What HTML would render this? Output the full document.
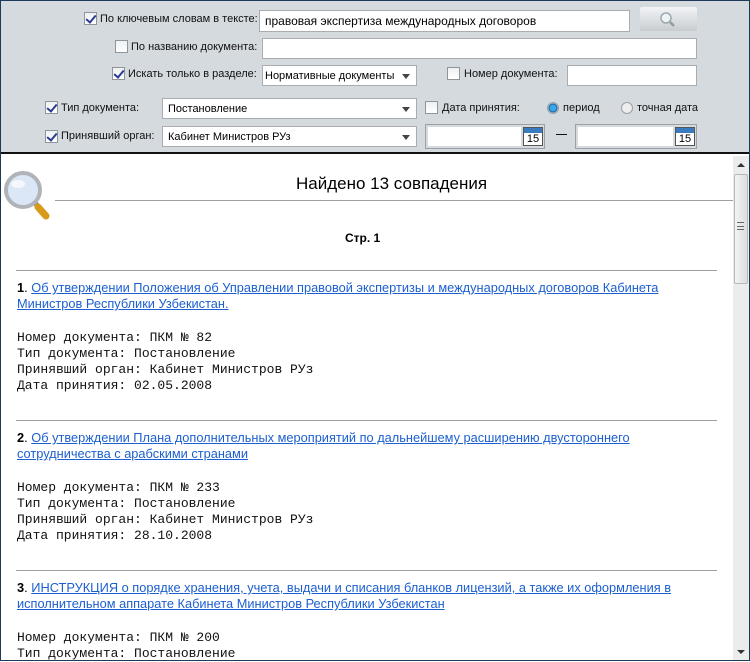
<!DOCTYPE html>
<html><head><meta charset="utf-8"><style>
*{margin:0;padding:0;box-sizing:border-box}
body{width:750px;height:661px;overflow:hidden;font-family:"Liberation Sans",sans-serif;font-size:12px;color:#000;background:#fff;position:relative}
.frame{position:absolute;left:0;top:0;width:750px;height:661px;border:1px solid #1e3a5a;pointer-events:none;z-index:10}
.top{position:absolute;left:0;top:0;width:750px;height:154px;background:#d5dadf;border-bottom:2px solid #111}
.a{position:absolute;white-space:nowrap}
.cb{position:absolute;width:13px;height:13px;border:1px solid #8f959b;background:linear-gradient(#eef0f2,#fff)}
.cb.on::after{content:"";position:absolute;left:3px;top:0px;width:4px;height:8px;border:solid #2a3a90;border-width:0 2px 2px 0;transform:rotate(40deg)}
.inp{position:absolute;background:#fff;border:1px solid #a9adb2;font-size:12px;padding:3px 5px;line-height:14px;white-space:nowrap;overflow:hidden}
.sel::after{content:"";position:absolute;right:6px;top:8px;border:4px solid transparent;border-top:5px solid #444;border-bottom:0}
.lab{position:absolute;font-size:11px;color:#111;white-space:nowrap}
.rad{position:absolute;width:12px;height:12px;border-radius:50%;border:1px solid #9aa0a6;background:#eee}
.rad.on{background:radial-gradient(circle,#3aa6e8 0 3px,#0a5c9e 4px,#ddd 5px)}
.cal{position:absolute;width:20px;height:19px;border:1px solid #555;background:#fff;font-size:11px;text-align:center;line-height:13px;padding-top:5px}
.cal::before{content:"";position:absolute;left:0;top:0;width:18px;height:5px;background:#3a7bbf}
.mono{font-family:"Liberation Mono",monospace;font-size:13px;line-height:16px;position:absolute;left:17px;white-space:pre;color:#111}
.link{position:absolute;left:17px;font-size:12.8px;line-height:16px;width:680px}
.link a{color:#1c5fd0;text-decoration:underline}
.hr{position:absolute;height:1px;background:#a0a0a0}
</style></head><body>
<div class="top">
<div class="cb on" style="left:84px;top:12px"></div><div class="lab" style="left:100px;top:13px">По ключевым словам в тексте:</div>
<div class="inp" style="left:259px;top:10px;width:371px;height:22px">правовая экспертиза международных договоров</div>
<div class="a" style="left:640px;top:7px;width:57px;height:24px;background:linear-gradient(#f2f4f6,#c8ccd0);border-radius:2px">
<svg width="57" height="24"><circle cx="26" cy="11" r="5" fill="#eef3f8" stroke="#9aa" stroke-width="1.5"/><line x1="30" y1="15" x2="34" y2="19" stroke="#999" stroke-width="2.5"/></svg></div>
<div class="cb" style="left:115px;top:40px"></div><div class="lab" style="left:131px;top:41px">По названию документа:</div>
<div class="inp" style="left:262px;top:38px;width:435px;height:21px"></div>
<div class="cb on" style="left:112px;top:67px"></div><div class="lab" style="left:128px;top:68px">Искать только в разделе:</div>
<div class="inp sel" style="left:262px;top:65px;width:155px;height:21px;padding:3px 2px;font-size:11px">Нормативные документы</div>
<div class="cb" style="left:447px;top:67px"></div><div class="lab" style="left:464px;top:68px">Номер документа:</div>
<div class="inp" style="left:567px;top:65px;width:130px;height:21px"></div>
<div class="cb on" style="left:45px;top:101px"></div><div class="lab" style="left:61px;top:102px">Тип документа:</div>
<div class="inp sel" style="left:162px;top:98px;width:255px;height:21px;font-size:11px">Постановление</div>
<div class="cb" style="left:425px;top:101px"></div><div class="lab" style="left:442px;top:102px">Дата принятия:</div>
<div class="rad on" style="left:547px;top:102px"></div><div class="lab" style="left:563px;top:102px">период</div>
<div class="rad" style="left:621px;top:102px"></div><div class="lab" style="left:637px;top:102px">точная дата</div>
<div class="cb on" style="left:45px;top:130px"></div><div class="lab" style="left:61px;top:130px">Принявший орган:</div>
<div class="inp sel" style="left:162px;top:126px;width:255px;height:21px;font-size:11px">Кабинет Министров РУз</div>
<div class="a" style="left:425px;top:124px;width:120px;height:25px;border:1px solid #9aa0a6;background:#d5dadf"><div style="position:absolute;left:2px;top:2px;width:93px;height:19px;background:#fff"></div><div class="cal" style="left:97px;top:2px">15</div></div>
<div class="a" style="left:556px;top:134px;width:11px;height:1px;background:#111"></div>
<div class="a" style="left:575px;top:124px;width:122px;height:25px;border:1px solid #9aa0a6;background:#d5dadf"><div style="position:absolute;left:2px;top:2px;width:95px;height:19px;background:#fff"></div><div class="cal" style="left:99px;top:2px">15</div></div>
</div>
<svg class="a" style="left:2px;top:168px" width="52" height="56"><line x1="32" y1="34" x2="44" y2="47" stroke="#888" stroke-width="5"/><line x1="36" y1="39" x2="44" y2="48" stroke="#d89a1a" stroke-width="7" stroke-linecap="round"/><circle cx="21" cy="22" r="17" fill="#dbe7f6" stroke="#b0b4b8" stroke-width="4"/><ellipse cx="16" cy="16" rx="7" ry="4" fill="#fff" opacity=".7"/></svg>
<div class="a" style="left:296px;top:174px;font-size:17px">Найдено 13 совпадения</div>
<div class="hr" style="left:55px;top:200px;width:678px"></div>
<div class="a" style="left:345px;top:231px;font-weight:bold;font-size:12px">Стр. 1</div>
<div class="hr" style="left:16px;top:270px;width:701px"></div>
<div class="link" style="top:280px"><b>1</b>. <a>Об утверждении Положения об Управлении правовой экспертизы и международных договоров Кабинета Министров Республики Узбекистан.</a></div>
<div class="mono" style="top:330px">Номер документа: ПКМ № 82
Тип документа: Постановление
Принявший орган: Кабинет Министров РУз
Дата принятия: 02.05.2008</div>
<div class="hr" style="left:16px;top:420px;width:701px"></div>
<div class="link" style="top:430px"><b>2</b>. <a>Об утверждении Плана дополнительных мероприятий по дальнейшему расширению двустороннего сотрудничества с арабскими странами</a></div>
<div class="mono" style="top:480px">Номер документа: ПКМ № 233
Тип документа: Постановление
Принявший орган: Кабинет Министров РУз
Дата принятия: 28.10.2008</div>
<div class="hr" style="left:16px;top:570px;width:701px"></div>
<div class="link" style="top:580px"><b>3</b>. <a>ИНСТРУКЦИЯ о порядке хранения, учета, выдачи и списания бланков лицензий, а также их оформления в исполнительном аппарате Кабинета Министров Республики Узбекистан</a></div>
<div class="mono" style="top:630px">Номер документа: ПКМ № 200
Тип документа: Постановление</div>
<div class="a" style="left:733px;top:156px;width:16px;height:504px;background:#ececec">
<div style="position:absolute;left:4px;top:7px;border:4px solid transparent;border-bottom:4px solid #333;border-top:0"></div>
<div style="position:absolute;left:1px;top:18px;width:14px;height:110px;border:1px solid #b8b8b8;border-radius:2px;background:linear-gradient(90deg,#f4f4f4,#dcdcdc)"></div>
<div style="position:absolute;left:4px;top:66px;width:7px;height:8px;border-top:1px solid #666;border-bottom:1px solid #666"><div style="margin-top:3px;height:1px;background:#666"></div></div>
<div style="position:absolute;left:4px;top:494px;border:4px solid transparent;border-top:4px solid #333;border-bottom:0"></div>
</div>
<div class="frame"></div>
</body></html>
